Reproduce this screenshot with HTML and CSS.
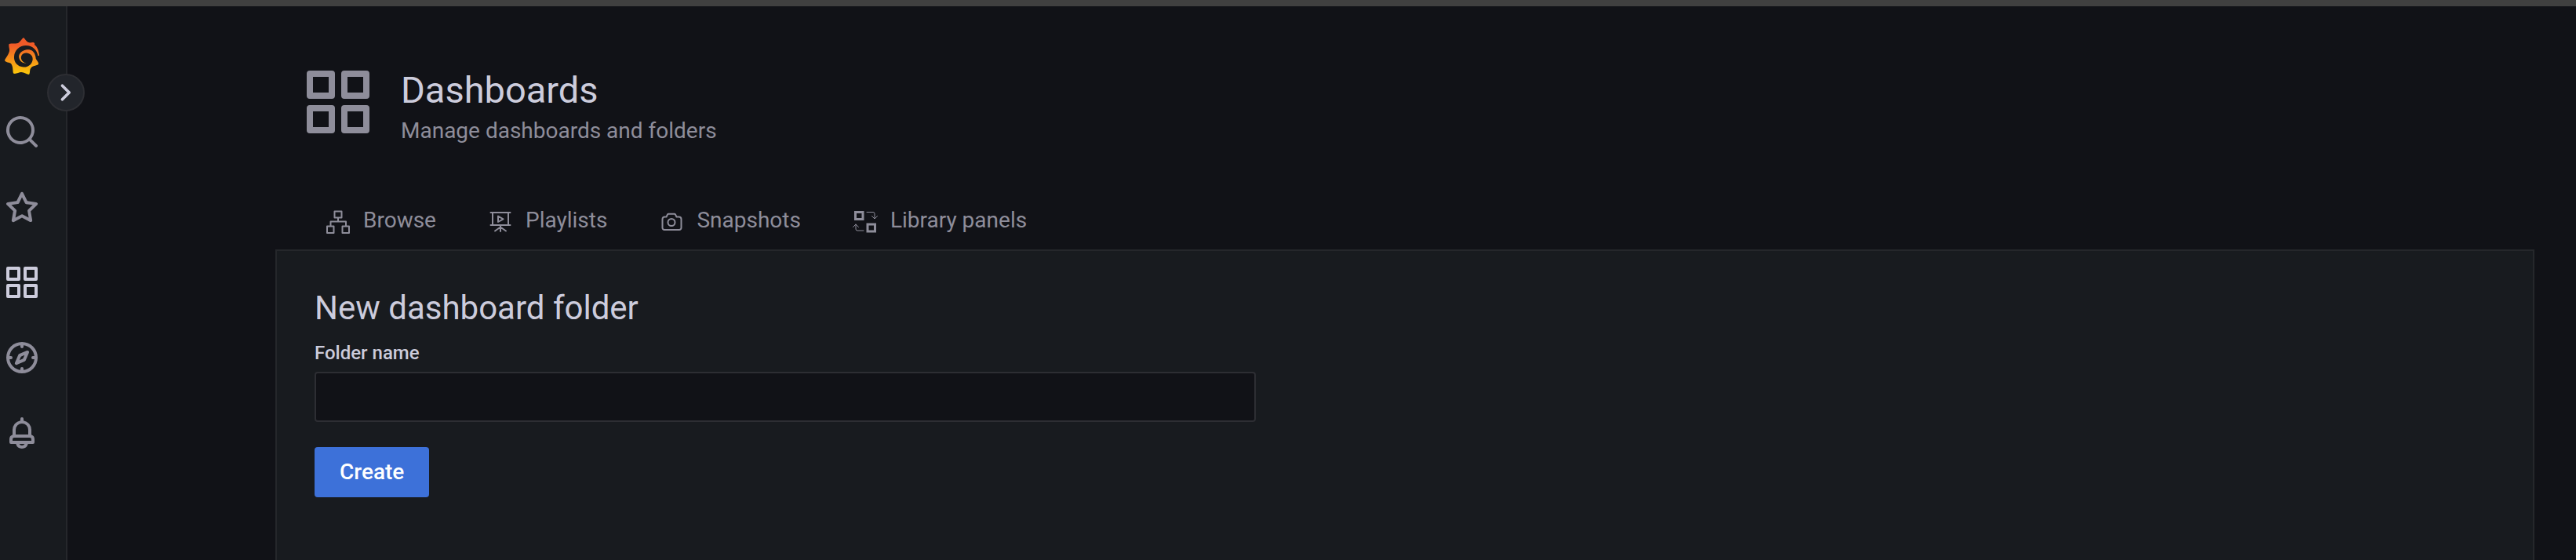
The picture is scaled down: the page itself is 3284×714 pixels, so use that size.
FILE: index.html
```html
<!DOCTYPE html>
<html lang="en">
<head>
<meta charset="utf-8">
<title>New dashboard folder</title>
<link rel="stylesheet" href="styles.css">
</head>
<body>
<div class="app">
  <nav class="sidebar" aria-label="Main menu">
    <a class="logo" href="#" aria-label="Home">
      <svg viewBox="0 0 44 47">
        <defs><linearGradient id="flame" x1="0" y1="0" x2="0" y2="1"><stop offset="0.2" stop-color="#f05a28"/><stop offset="1" stop-color="#fbca0a"/></linearGradient></defs>
        <path fill="url(#flame)" d="M44 23C43.500 16 41 11 38 9C38.500 7 37.500 6 36 6C34 6 32 7 30.500 6C28 5.500 25.500 1 24 0C22 1 20 5 17 7C13 8 9 7 5.500 8C4.500 11 6.500 14 6 17C5 22 1 26 0 29C1 32 6 31 8 33C11 37 10 42 11 45.500C14 47 18 44 21 44C25 44 28 47 31 47C33 44 31 41 34 38C37 35 41 36 43 34C44 31 39 28 39.500 25C38 16 32 14.500 27 15.500C20 17 17 22 18.500 26.500C20 31 24 33.500 29 32C26 33 22 31 21 27C20 22 24 19 28 19.500C34 20 36.500 25 35.500 29C34 35 29 38 24 37.500C16 37 11.500 31 12 24C12.500 16 19 10 27 10C36 10 41 16 42.500 23Z"/>
      </svg>
    </a>
    <a class="item" href="#" aria-label="Search"><svg viewBox="0 0 24 24"><path d="M21.71,20.29,18,16.61A9,9,0,1,0,16.61,18l3.68,3.68a1,1,0,0,0,1.42,0A1,1,0,0,0,21.71,20.29ZM11,18a7,7,0,1,1,7-7A7,7,0,0,1,11,18Z"/></svg></a>
    <a class="item" href="#" aria-label="Starred"><svg viewBox="0 0 24 24"><path d="M22,9.67A1,1,0,0,0,21.14,9l-5.69-.83L12.9,3a1,1,0,0,0-1.8,0L8.55,8.16,2.86,9a1,1,0,0,0-.81.68,1,1,0,0,0,.25,1l4.13,4-1,5.68A1,1,0,0,0,6.9,21.44L12,18.77l5.1,2.67a.93.93,0,0,0,.46.12,1,1,0,0,0,.59-.19,1,1,0,0,0,.4-1l-1-5.68,4.13-4A1,1,0,0,0,22,9.67Zm-6.15,4a1,1,0,0,0-.29.88l.72,4.2-3.76-2a1.06,1.06,0,0,0-.94,0l-3.76,2,.72-4.2a1,1,0,0,0-.29-.88l-3-3,4.21-.61a1,1,0,0,0,.76-.55L12,5.7l1.88,3.82a1,1,0,0,0,.76.55l4.21.61Z"/></svg></a>
    <a class="item active" href="#" aria-label="Dashboards"><svg viewBox="0 0 24 24"><path id="apps" d="M10,13H3a1,1,0,0,0-1,1v7a1,1,0,0,0,1,1h7a1,1,0,0,0,1-1V14A1,1,0,0,0,10,13ZM9,20H4V15H9ZM21,2H14a1,1,0,0,0-1,1v7a1,1,0,0,0,1,1h7a1,1,0,0,0,1-1V3A1,1,0,0,0,21,2ZM20,9H15V4h5Zm1,4H14a1,1,0,0,0-1,1v7a1,1,0,0,0,1,1h7a1,1,0,0,0,1-1V14A1,1,0,0,0,21,13Zm-1,7H15V15h5ZM10,2H3A1,1,0,0,0,2,3v7a1,1,0,0,0,1,1h7a1,1,0,0,0,1-1V3A1,1,0,0,0,10,2ZM9,9H4V4H9Z"/></svg></a>
    <a class="item" href="#" aria-label="Explore"><svg viewBox="0 0 24 24"><path d="M12,2A10,10,0,1,0,22,12,10,10,0,0,0,12,2Zm1,17.93V19a1,1,0,0,0-2,0v.93A8,8,0,0,1,4.07,13H5a1,1,0,0,0,0-2H4.07A8,8,0,0,1,11,4.07V5a1,1,0,0,0,2,0V4.07A8,8,0,0,1,19.93,11H19a1,1,0,0,0,0,2h.93A8,8,0,0,1,13,19.93ZM15.14,7.55l-5,2.12a1,1,0,0,0-.52.52l-2.12,5a1,1,0,0,0,.21,1.1,1,1,0,0,0,.7.29.93.93,0,0,0,.4-.09l5-2.12a1,1,0,0,0,.52-.52l2.12-5a1,1,0,0,0-1.31-1.31Zm-2.49,5.1-2.28,1,1-2.28,2.28-1Z"/></svg></a>
    <a class="item" href="#" aria-label="Alerting"><svg viewBox="0 0 24 24"><path d="M18,13.18V10a6,6,0,0,0-5-5.91V3a1,1,0,0,0-2,0V4.09A6,6,0,0,0,6,10v3.18A3,3,0,0,0,4,16v2a1,1,0,0,0,1,1H8.14a4,4,0,0,0,7.72,0H19a1,1,0,0,0,1-1V16A3,3,0,0,0,18,13.18ZM8,10a4,4,0,0,1,8,0v3H8Zm4,10a2,2,0,0,1-1.72-1h3.44A2,2,0,0,1,12,20Zm6-3H6V16a1,1,0,0,1,1-1H17a1,1,0,0,1,1,1Z"/></svg></a>
    <button class="toggle" type="button" aria-label="Expand menu"><svg viewBox="0 0 24 24"><path d="M9.500 7.200L14.300 12L9.500 16.800"/></svg></button>
  </nav>
  <main class="page">
    <header class="page-header">
      <svg class="page-icon" viewBox="0 0 24 24"><use href="#apps"/></svg>
      <div class="titles">
        <h1>Dashboards</h1>
        <p>Manage dashboards and folders</p>
      </div>
    </header>
    <nav class="tabs" aria-label="Dashboards">
      <a href="#"><svg viewBox="0 0 32 32"><path d="M11.500 2.500h9v8h-9zM2 21.500h8.500v8.500H2zM21.500 21.500H30V30h-8.500zM16 10.500v5M6.500 21.500v-6h19.500v6"/></svg>Browse</a>
      <a href="#"><svg viewBox="0 0 32 32"><path d="M3.500 4h25M3.500 20h25M6 4v16M26 4v16M16 20v8M9 27.500l7-5 7 5M13 8.500v7.500l6.500-3.700z"/></svg>Playlists</a>
      <a href="#"><svg viewBox="0 0 32 32"><path d="M6.500 9.500h3l1.500-3c.3-.600.700-.800 1.300-.800h7.400c.600 0 1 .200 1.300.800l1.500 3h3a3 3 0 0 1 3 3v11a2.500 2.500 0 0 1-2.500 2.500h-19a2.500 2.500 0 0 1-2.500-2.500v-11a3 3 0 0 1 3-3z"/><circle cx="16" cy="16.500" r="4.500"/></svg>Snapshots</a>
      <a href="#"><svg viewBox="0 0 32 32"><path stroke-width="3" stroke-linejoin="miter" d="M3.500 3.500h9.500v9h-9.500zM19 19h9.500v9H19z"/><path class="thin" d="M18 3.500h8q2 0 2 2v6M24.500 8.500l3.500 3.500 3.500-3.500M14 27H6q-2 0-2-2v-6M.5 22.500L4 19l3.500 3.500"/></svg>Library panels</a>
    </nav>
    <section class="panel">
      <h2>New dashboard folder</h2>
      <form>
        <label for="folder">Folder name</label>
        <input id="folder" type="text">
        <button class="create" type="button">Create</button>
      </form>
    </section>
  </main>
</div>
</body>
</html>
```
FILE: styles.css
```css
* { box-sizing: border-box; }

body {
  margin: 0;
  background: #111217;
  color: #ccccdc;
  font: 28px/44px Roboto, sans-serif;
}

h1, h2, p { margin: 0; font-weight: 400; }

a { color: inherit; text-decoration: none; }

.app {
  display: flex;
  min-height: 100vh;
  border-top: 8px solid #404040;
}

.sidebar {
  position: relative;
  flex: none;
  width: 86px;
  padding: 40px 4px 0;
  background: #181b1f;
  border-right: 2px solid #25272b;
  color: #8e8d9a;
}

.sidebar svg { display: block; fill: currentColor; }

.logo { display: block; height: 72px; padding-left: 2px; }
.logo svg { width: 44px; height: 47px; }

.item { display: flex; align-items: center; height: 96px; }
.item svg { width: 48px; height: 48px; }
.item.active { color: #ccccdc; }

.toggle {
  position: absolute;
  top: 86px;
  right: -24px;
  width: 48px;
  height: 48px;
  padding: 0;
  border: 2px solid #2d2e33;
  border-radius: 50%;
  background: #22252b;
  color: #ccccdc;
}

.sidebar .toggle svg {
  width: 44px;
  height: 44px;
  fill: none;
  stroke: currentColor;
  stroke-width: 2;
  stroke-linecap: round;
  stroke-linejoin: round;
}

.page {
  flex: 1;
  display: flex;
  flex-direction: column;
  padding: 74px 53px 0 265px;
}

.page-header {
  display: flex;
  gap: 32px;
  padding-left: 32px;
  color: #8e8d9a;
}

.page-icon { width: 96px; height: 96px; fill: currentColor; }

h1 { color: #ccccdc; font-size: 47px; line-height: 66px; }
.titles p { line-height: 38px; }

.tabs {
  display: flex;
  gap: 66px;
  height: 68px;
  margin-top: 64px;
  padding-left: 64px;
  color: #8e8d9a;
}

.tabs a { display: flex; gap: 16px; height: 62px; align-items: center; }

.tabs svg {
  width: 32px;
  height: 32px;
  margin-top: 4px;
  fill: none;
  stroke: currentColor;
  stroke-width: 2;
  stroke-linecap: round;
  stroke-linejoin: round;
}

.tabs .thin { stroke-width: 1; }

.panel {
  flex: 1;
  padding: 48px;
  background: #181b1f;
  border: 2px solid #25272b;
  border-bottom: 0;
}

h2 { font-size: 42px; line-height: 50px; }

form { display: flex; flex-direction: column; align-items: flex-start; }

label { font-size: 24px; line-height: 32px; font-weight: 500; margin: 16px 0 8px; }

input {
  width: 100%;
  max-width: 1200px;
  height: 64px;
  padding: 0 16px;
  border: 2px solid #2d2e33;
  border-radius: 4px;
  background: #111217;
  color: #ccccdc;
  font: inherit;
}

.create {
  height: 64px;
  margin-top: 32px;
  padding: 0 32px;
  border: 0;
  border-radius: 4px;
  background: #3d71d9;
  color: #fff;
  font: inherit;
  font-weight: 500;
}
```
